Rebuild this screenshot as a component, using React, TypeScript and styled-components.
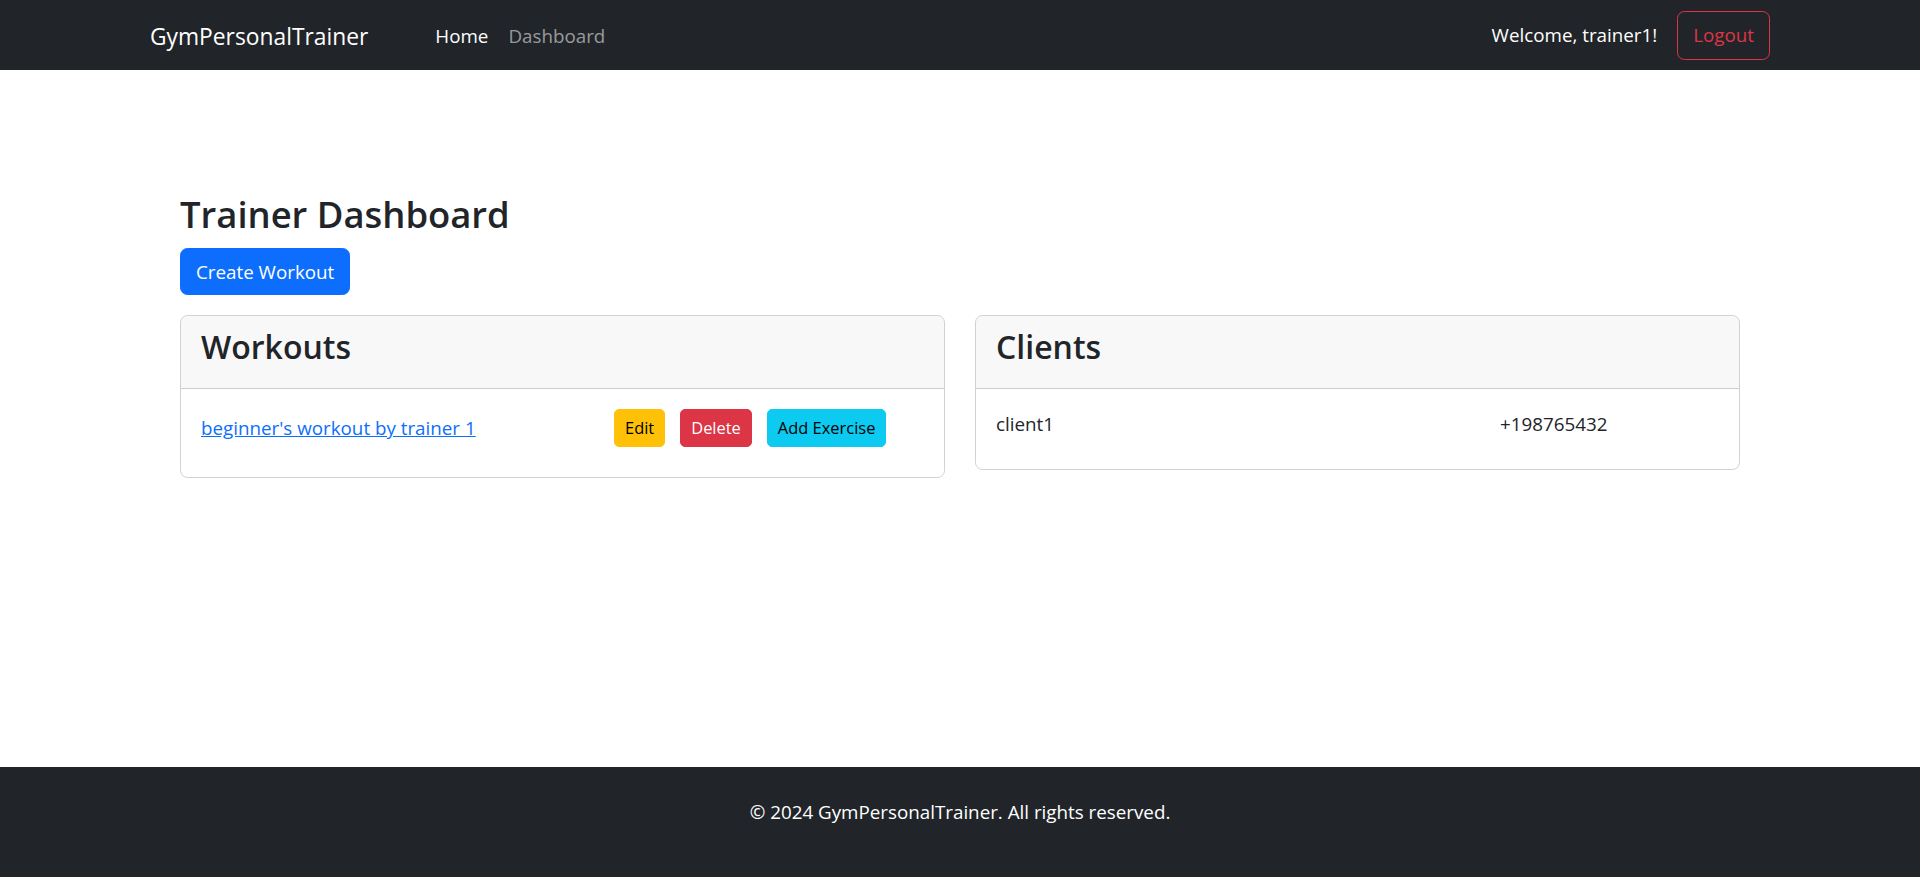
import styled, { createGlobalStyle } from 'styled-components'

const GlobalStyle = createGlobalStyle`
    * {
        box-sizing: border-box;
    }
    body {
        margin: 0;
        font-family: "Open Sans", "Noto Sans", Arial, sans-serif;
        font-size: 18.8px;
        line-height: 30px;
        color: #212529;
        background: #fff;
    }
`

const Page = styled.div`
    display: flex;
    flex-direction: column;
    min-height: 100vh;
`

const Navbar = styled.nav`
    background: #212529;
    padding: 10px 0;
`

const NavInner = styled.div`
    width: 1620px;
    margin: 0 auto;
    display: flex;
    align-items: center;
`

const Brand = styled.a`
    font-size: 22.8px;
    line-height: 37.5px;
    padding: 7.5px 0 5px;
    color: #fff;
    text-decoration: none;
    margin-right: 57px;
`

const NavLinks = styled.div`
    display: flex;
`

const NavLink = styled.a<{ $active?: boolean }>`
    padding: 11px 10px 9px;
    color: ${(p) => (p.$active ? '#fff' : 'rgba(255, 255, 255, 0.55)')};
    text-decoration: none;
`

const NavRight = styled.div`
    margin-left: auto;
    display: flex;
    align-items: center;
    gap: 20px;
`

const Welcome = styled.span`
    color: #fff;
`

const Button = styled.button<{ $variant: 'primary' | 'warning' | 'danger' | 'info' | 'outline-danger'; $small?: boolean }>`
    font-family: inherit;
    font-size: ${(p) => (p.$small ? '16.45px' : '18.8px')};
    line-height: ${(p) => (p.$small ? '26.25px' : '30px')};
    padding: ${(p) => (p.$small ? '5px 10px' : '7.5px 15px')};
    border-radius: ${(p) => (p.$small ? '5px' : '7.5px')};
    border: 1px solid;
    cursor: pointer;
    ${(p) => {
        switch (p.$variant) {
            case 'primary':
                return 'background:#0d6efd;border-color:#0d6efd;color:#fff;'
            case 'warning':
                return 'background:#ffc107;border-color:#ffc107;color:#000;'
            case 'danger':
                return 'background:#dc3545;border-color:#dc3545;color:#fff;'
            case 'info':
                return 'background:#0dcaf0;border-color:#0dcaf0;color:#000;'
            default:
                return 'background:transparent;border-color:#dc3545;color:#dc3545;padding:8.5px 15px;'
        }
    }}
`

const Main = styled.main`
    width: 1560px;
    margin: 0 auto;
    padding-top: 120px;
`

const Title = styled.h2`
    font-size: 36.4px;
    font-weight: 600;
    line-height: 48px;
    margin: 0 0 10px;
`

const CreateRow = styled.div`
    margin-bottom: 20px;
`

const Columns = styled.div`
    display: grid;
    grid-template-columns: 1fr 1fr;
    gap: 30px;
    align-items: start;
`

const Card = styled.section`
    border: 1px solid rgba(0, 0, 0, 0.175);
    border-radius: 7.5px;
    overflow: hidden;
`

const CardHeader = styled.div`
    padding: 10px 20px;
    background: rgba(33, 37, 41, 0.03);
    border-bottom: 1px solid rgba(0, 0, 0, 0.175);
`

const CardTitle = styled.h3`
    font-size: 32px;
    font-weight: 600;
    line-height: 42px;
    margin: 0 0 10px;
`

const CardBody = styled.div`
    padding: 20px;
`

const ItemRow = styled.div<{ $split: number }>`
    display: grid;
    grid-template-columns: ${(p) => p.$split}px auto;
    align-items: center;
    margin-bottom: 10px;
`

const WorkoutLink = styled.a`
    color: #0d6efd;
    text-decoration: underline;
`

const Actions = styled.div`
    display: flex;
    gap: 15px;
`

const Footer = styled.footer`
    margin-top: auto;
    background: #212529;
    color: #fff;
    text-align: center;
    padding: 30px 0;

    p {
        margin: 0 0 20px;
    }
`

export default function App() {
    return (
        <Page>
            <GlobalStyle />
            <Navbar>
                <NavInner>
                    <Brand href="#">GymPersonalTrainer</Brand>
                    <NavLinks>
                        <NavLink $active href="#">Home</NavLink>
                        <NavLink href="#">Dashboard</NavLink>
                    </NavLinks>
                    <NavRight>
                        <Welcome>Welcome, trainer1!</Welcome>
                        <Button $variant="outline-danger">Logout</Button>
                    </NavRight>
                </NavInner>
            </Navbar>

            <Main>
                <Title>Trainer Dashboard</Title>
                <CreateRow>
                    <Button $variant="primary">Create Workout</Button>
                </CreateRow>
                <Columns>
                    <Card>
                        <CardHeader>
                            <CardTitle>Workouts</CardTitle>
                        </CardHeader>
                        <CardBody>
                            <ItemRow $split={413}>
                                <WorkoutLink href="#">beginner's workout by trainer 1</WorkoutLink>
                                <Actions>
                                    <Button $small $variant="warning">Edit</Button>
                                    <Button $small $variant="danger">Delete</Button>
                                    <Button $small $variant="info">Add Exercise</Button>
                                </Actions>
                            </ItemRow>
                        </CardBody>
                    </Card>
                    <Card>
                        <CardHeader>
                            <CardTitle>Clients</CardTitle>
                        </CardHeader>
                        <CardBody>
                            <ItemRow $split={504}>
                                <span>client1</span>
                                <span>+198765432</span>
                            </ItemRow>
                        </CardBody>
                    </Card>
                </Columns>
            </Main>

            <Footer>
                <p>© 2024 GymPersonalTrainer. All rights reserved.</p>
            </Footer>
        </Page>
    )
}
